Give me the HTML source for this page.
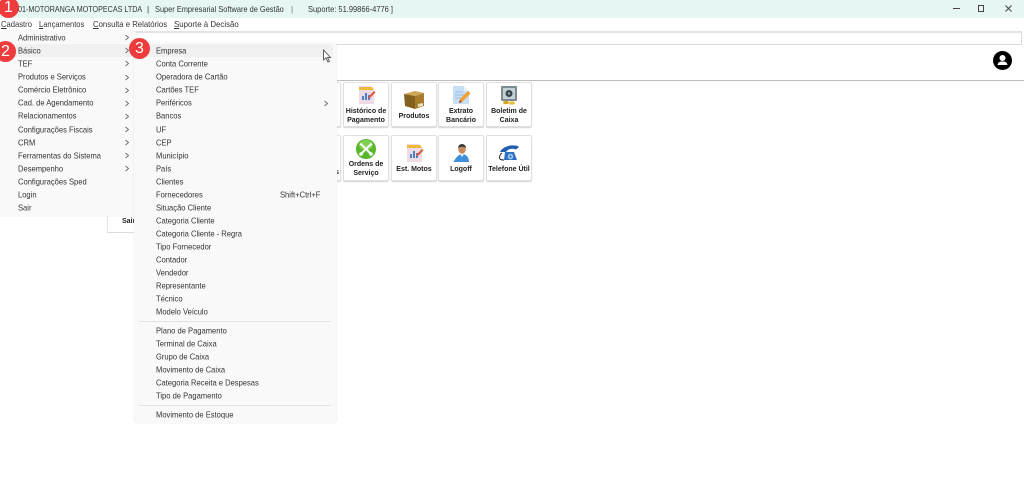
<!DOCTYPE html>
<html lang="pt"><head><meta charset="utf-8"><title>Super Empresarial</title>
<style>
html,body{margin:0;padding:0;width:1024px;height:498px;overflow:hidden;background:#fff;font-family:"Liberation Sans",sans-serif;color:#222}
*{box-sizing:border-box}
.a{position:absolute}
.t{position:absolute;font-size:8.4px;line-height:12px;white-space:nowrap;color:#333;transform-origin:0 50%;transform:translateY(-6.500px) scaleX(.905)}
.top{position:absolute;font-size:8.4px;line-height:12px;white-space:nowrap;color:#333;transform-origin:0 50%}
u{text-decoration:underline}
.btn{position:absolute;background:#fff;border:1px solid #e0e0e0;border-radius:2px;box-shadow:0 1px 1px #d4d4d4;font:bold 7px/8.500px "Liberation Sans",sans-serif;text-align:center;color:#222}
.btn span{position:absolute;left:0;right:0}
.btn svg{position:absolute;left:50%;margin-left:-10px;width:20px;height:20px}
.badge{position:absolute;border-radius:50%;background:#ee3b3b;color:#fff;font-size:16px;line-height:21px;text-align:center;width:21px;height:21px}
</style></head><body>
<div class="a" style="left:0;top:0;width:1024px;height:18px;background:#e6f6f4"></div>
<div class="top" style="left:18px;top:3px;transform:scaleX(.855)">01-MOTORANGA MOTOPECAS LTDA</div>
<div class="top" style="left:147px;top:3px">|</div>
<div class="top" style="left:155px;top:3px;transform:scaleX(.884)">Super Empresarial Software de Gestão</div>
<div class="top" style="left:291px;top:3px;color:#777">|</div>
<div class="top" style="left:308px;top:3px;transform:scaleX(.895)">Suporte: 51.99866-4776 ]</div>
<svg class="a" style="left:950px;top:3px" width="66" height="11" viewBox="0 0 66 11" fill="none" stroke="#444" stroke-width="1"><path d="M3 5.500h7"/><rect x="28.500" y="2.500" width="5" height="6"/><path d="M55.500 2.500l6 6M61.500 2.500l-6 6"/></svg>
<div class="top" style="left:1px;top:18px;transform:scaleX(.91)"><u>C</u>adastro</div>
<div class="top" style="left:39px;top:18px;transform:scaleX(.9)"><u>L</u>ançamentos</div>
<div class="top" style="left:93px;top:18px;transform:scaleX(.925)"><u>C</u>onsulta e Relatórios</div>
<div class="top" style="left:174px;top:18px;transform:scaleX(.94)"><u>S</u>uporte à Decisão</div>

<div class="a" style="left:0;top:31px;width:1022px;height:14px;background:#fff;border:1px solid #d8d8d8;border-top:2px solid #e4e4e4"></div>
<div class="a" style="left:0;top:80px;width:1024px;height:1px;background:#bdbdbd"></div>
<svg class="a" style="left:993px;top:51px" width="19" height="19" viewBox="0 0 19 19"><circle cx="9.500" cy="9.500" r="9.500" fill="#000"/><circle cx="9.500" cy="7" r="3" fill="#fff"/><path d="M4.500 14c.5-3 2.500-3.500 5-3.500s4.500.5 5 3.500z" fill="#fff"/></svg>

<!-- Row 1 buttons -->
<div class="btn" style="left:300px;top:82px;width:41px;height:45px"></div>
<div class="btn" style="left:343px;top:82px;width:46px;height:45px"><svg style="top:2px" viewBox="0 0 20 20"><path d="M3 1h12l3 3v15H3z" fill="#eedbe6"/><path d="M3 2h13l2 3H3z" fill="#f0b93a"/><path d="M6 15V11h2v4zM9 15V8h2v7zM12 15v-5h2v5z" fill="#4a80c8"/><path d="M12 12l6-6 1.500 1.500-6 6z" fill="#e2583e"/></svg><span style="top:25px">Histórico de<br>Pagamento</span></div>
<div class="btn" style="left:391px;top:82px;width:46px;height:45px"><svg style="top:7px" viewBox="0 0 20 20"><path d="M0 4l11-3 9 2-9 3z" fill="#cda653"/><path d="M0 4l11 2v13L1 16z" fill="#84601f"/><path d="M11 6l9-3v13l-9 3z" fill="#a87c2f"/><path d="M14 14l5-1v3l-5 1z" fill="#e8e0c8"/></svg><span style="top:30px">Produtos</span></div>
<div class="btn" style="left:438px;top:82px;width:46px;height:45px"><svg style="top:2px" viewBox="0 0 20 20"><path d="M2 1h11l5 5v13H2z" fill="#c8def5"/><path d="M13 1l5 5h-5z" fill="#e8f2fc"/><path d="M4 7h8M4 10h9M4 13h6" stroke="#8fb3d9" stroke-width=".8"/><path d="M8 18l1-4 8-8 2.500 2.500-8 8z" fill="#f0a030"/><path d="M8 18l1-3 2 2z" fill="#a33"/></svg><span style="top:25px">Extrato<br>Bancário</span></div>
<div class="btn" style="left:486px;top:82px;width:46px;height:45px"><svg style="top:2px" viewBox="0 0 20 20"><rect x="2" y="1" width="16" height="15" rx="1" fill="#7d8b90"/><rect x="4" y="3" width="12" height="11" fill="#c3d1d5"/><circle cx="10" cy="8.500" r="3.500" fill="#3a4448"/><circle cx="10" cy="8.500" r="1.200" fill="#9fb0b5"/><ellipse cx="7" cy="17.500" rx="3" ry="1.800" fill="#d6a727"/><ellipse cx="13" cy="18" rx="3" ry="1.800" fill="#e8bd3a"/></svg><span style="top:25px">Boletim de<br>Caixa</span></div>

<!-- Row 2 buttons -->
<div class="btn" style="left:300px;top:135px;width:41px;height:46px"><span style="top:33px;text-align:right;padding-right:1px">s</span></div>
<div class="btn" style="left:343px;top:135px;width:46px;height:46px"><svg style="top:3px" viewBox="0 0 20 20"><circle cx="10" cy="10" r="10" fill="#58b82c"/><ellipse cx="10" cy="6" rx="7" ry="5" fill="#9fe070" opacity=".6"/><path d="M6 6l8 8M14 6l-8 8" stroke="#fff" stroke-width="2"/><path d="M3.500 5.500l2-2 1 2.500-1 1zM16.500 5.500l-2-2-1 2.500 1 1z" fill="#fff"/><circle cx="15" cy="15" r="1.800" fill="#fff"/><circle cx="5" cy="15" r="1.800" fill="#fff"/></svg><span style="top:25px">Ordens de<br>Serviço</span></div>
<div class="btn" style="left:391px;top:135px;width:46px;height:46px"><svg style="top:7px" viewBox="0 0 20 20"><path d="M3 1h12l3 3v15H3z" fill="#eedbe6"/><path d="M3 2h13l2 3H3z" fill="#f0b93a"/><path d="M6 15V11h2v4zM9 15V8h2v7zM12 15v-5h2v5z" fill="#4a80c8"/><path d="M12 12l6-6 1.500 1.500-6 6z" fill="#e2583e"/></svg><span style="top:30px">Est. Motos</span></div>
<div class="btn" style="left:438px;top:135px;width:46px;height:46px"><svg style="top:7px" viewBox="0 0 20 20"><ellipse cx="11" cy="6" rx="3.800" ry="4.800" fill="#c98a5e"/><path d="M7 5a4 4 0 0 1 8 0c-2-1.500-6-1.500-8 0z" fill="#3c3c3c"/><path d="M2 19c2-1 3-7 9-8 5 .2 7 4 7 8z" fill="#3f8fdc"/><path d="M9 11l2 3 2-3z" fill="#e8f2fc"/></svg><span style="top:30px">Logoff</span></div>
<div class="btn" style="left:486px;top:135px;width:46px;height:46px"><svg style="top:8px" viewBox="0 0 20 20"><path d="M1 8C4 1 17 0 20 3l-3 2.500c-3-1.500-8-1-10 2.500z" fill="#1f5fae"/><path d="M6 8h9l3 8H5z" fill="#2c70c4"/><circle cx="11.500" cy="12.500" r="2.800" fill="#9fc8f0"/><circle cx="11.500" cy="12.500" r="1" fill="#1f5fae"/><path d="M1 15c-1-2 0-5 2-6M1 15c1 1 2 1 4 1" stroke="#222" fill="none"/></svg><span style="top:30px">Telefone Útil</span></div>

<!-- Sair button -->
<div class="a" style="left:107px;top:200px;width:40px;height:33px;border-left:1px solid #e4e4e4;border-bottom:1px solid #dcdcdc"></div>
<div class="a" style="left:122px;top:218px;font:bold 7px/8px 'Liberation Sans',sans-serif;color:#222">Sair</div>

<!-- Left menu -->
<div class="a" style="left:0;top:31px;width:137px;height:185px;background:#f9f9f9;border-radius:0 4px 4px 0;box-shadow:0 0 1px #ccc"></div>
<div class="a" style="left:0;top:44px;width:134px;height:13px;background:#f0f0f0"></div>
<div class="t" style="left:18px;top:37.500px">Administrativo</div>
<div class="t" style="left:18px;top:50.500px">Básico</div>
<div class="t" style="left:18px;top:63.500px">TEF</div>
<div class="t" style="left:18px;top:77px">Produtos e Serviços</div>
<div class="t" style="left:18px;top:90px">Comércio Eletrônico</div>
<div class="t" style="left:18px;top:103px">Cad. de Agendamento</div>
<div class="t" style="left:18px;top:116px">Relacionamentos</div>
<div class="t" style="left:18px;top:129.500px">Configurações Fiscais</div>
<div class="t" style="left:18px;top:142.500px">CRM</div>
<div class="t" style="left:18px;top:155.500px">Ferramentas do Sistema</div>
<div class="t" style="left:18px;top:168.500px">Desempenho</div>
<div class="t" style="left:18px;top:181.500px">Configurações Sped</div>
<div class="t" style="left:18px;top:194.500px">Login</div>
<div class="t" style="left:18px;top:207.500px">Sair</div>
<svg class="a" style="left:124px;top:34px" width="6" height="140" fill="none" stroke="#666" stroke-width=".9"><path d="M1.500 1l3 2.500-3 2.500M1.500 14l3 2.500-3 2.500M1.500 27l3 2.500-3 2.500M1.500 41l3 2.500-3 2.500M1.500 54l3 2.500-3 2.500M1.500 67l3 2.500-3 2.500M1.500 80l3 2.500-3 2.500M1.500 93l3 2.500-3 2.500M1.500 106l3 2.500-3 2.500M1.500 119l3 2.500-3 2.500M1.500 132l3 2.500-3 2.500"/></svg>

<!-- Sub menu -->
<div class="a" style="left:134px;top:43px;width:203px;height:380px;background:#f9f9f9;border-radius:4px;box-shadow:0 0 1px #ccc"></div>
<div class="a" style="left:137px;top:44px;width:196px;height:13px;background:#f0f0f0;border-radius:3px"></div>
<div class="t" style="left:156px;top:50.500px">Empresa</div>
<div class="t" style="left:156px;top:63.500px">Conta Corrente</div>
<div class="t" style="left:156px;top:77px">Operadora de Cartão</div>
<div class="t" style="left:156px;top:90px">Cartões TEF</div>
<div class="t" style="left:156px;top:103px">Periféricos</div>
<div class="t" style="left:156px;top:116px">Bancos</div>
<div class="t" style="left:156px;top:129.500px">UF</div>
<div class="t" style="left:156px;top:142.500px">CEP</div>
<div class="t" style="left:156px;top:155.500px">Município</div>
<div class="t" style="left:156px;top:168.500px">País</div>
<div class="t" style="left:156px;top:181.500px">Clientes</div>
<div class="t" style="left:156px;top:194.500px">Fornecedores</div>
<div class="t" style="left:280px;top:194.500px">Shift+Ctrl+F</div>
<div class="t" style="left:156px;top:207.500px">Situação Cliente</div>
<div class="t" style="left:156px;top:220.500px">Categoria Cliente</div>
<div class="t" style="left:156px;top:233.500px">Categoria Cliente - Regra</div>
<div class="t" style="left:156px;top:246.500px">Tipo Fornecedor</div>
<div class="t" style="left:156px;top:260px">Contador</div>
<div class="t" style="left:156px;top:273px">Vendedor</div>
<div class="t" style="left:156px;top:286px">Representante</div>
<div class="t" style="left:156px;top:299px">Técnico</div>
<div class="t" style="left:156px;top:312px">Modelo Veículo</div>
<div class="a" style="left:139px;top:321px;width:192px;height:1px;background:#e2e2e2"></div>
<div class="t" style="left:156px;top:330.500px">Plano de Pagamento</div>
<div class="t" style="left:156px;top:343.500px">Terminal de Caixa</div>
<div class="t" style="left:156px;top:356.500px">Grupo de Caixa</div>
<div class="t" style="left:156px;top:370px">Movimento de Caixa</div>
<div class="t" style="left:156px;top:383px">Categoria Receita e Despesas</div>
<div class="t" style="left:156px;top:396px">Tipo de Pagamento</div>
<div class="a" style="left:139px;top:405px;width:192px;height:1px;background:#e2e2e2"></div>
<div class="t" style="left:156px;top:414.500px">Movimento de Estoque</div>
<svg class="a" style="left:323px;top:100px" width="6" height="7" fill="none" stroke="#666" stroke-width=".9"><path d="M1.500 1l3 2.500-3 2.500"/></svg>

<!-- Cursor -->
<svg class="a" style="left:322px;top:49px" width="10" height="14" viewBox="0 0 10 14"><path d="M1.500 1v10l2.500-2 2 4 1.500-.7-2-3.800h3z" fill="#fff" stroke="#555" stroke-width=".9"/></svg>

<!-- Badges -->
<div class="badge" style="left:-2px;top:-3px">1</div>
<div class="badge" style="left:-5px;top:41px">2</div>
<div class="badge" style="left:129px;top:38px">3</div>
</body></html>
